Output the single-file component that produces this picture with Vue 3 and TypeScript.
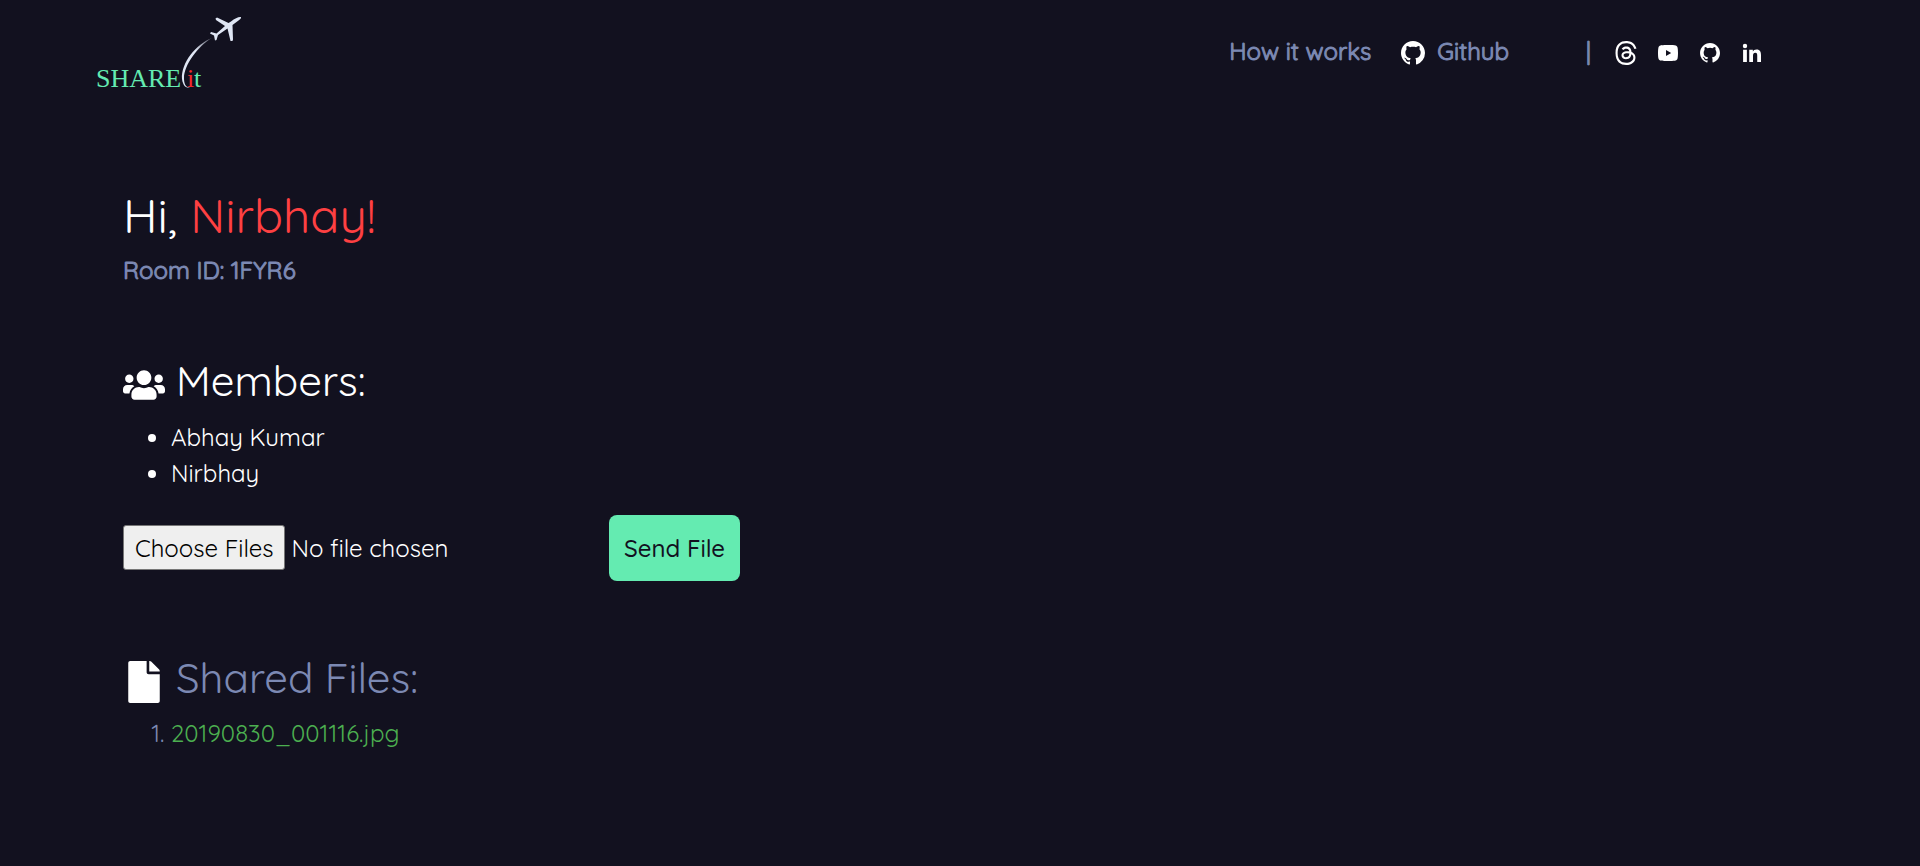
<script setup lang="ts">
const github =
  'M8 0C3.58 0 0 3.58 0 8c0 3.54 2.29 6.53 5.47 7.59.4.07.55-.17.55-.38 0-.19-.01-.82-.01-1.49-2.01.37-2.53-.49-2.69-.94-.09-.23-.48-.94-.82-1.13-.28-.15-.68-.52-.01-.53.63-.01 1.08.58 1.23.82.72 1.21 1.87.87 2.33.66.07-.52.28-.87.51-1.07-1.78-.2-3.64-.89-3.64-3.95 0-.87.31-1.59.82-2.15-.08-.2-.36-1.02.08-2.12 0 0 .67-.21 2.2.82.64-.18 1.32-.27 2-.27s1.36.09 2 .27c1.53-1.04 2.2-.82 2.2-.82.44 1.1.16 1.92.08 2.12.51.56.82 1.27.82 2.15 0 3.07-1.87 3.75-3.65 3.95.29.25.54.73.54 1.48 0 1.07-.01 1.93-.01 2.2 0 .21.15.46.55.38A8.01 8.01 0 0016 8c0-4.42-3.58-8-8-8'

const user: string = 'Nirbhay'
const roomId: string = '1FYR6'
const members: string[] = ['Abhay Kumar', 'Nirbhay']
const sharedFiles: string[] = ['20190830_001116.jpg']
</script>

<template>
  <div class="page">
    <header class="header">
      <a href="#" class="logo" aria-label="SHAREit home">
        <svg width="146" height="80" viewBox="0 0 146 80">
          <defs>
            <linearGradient id="trail" x1="0" y1="1" x2="1" y2="0">
              <stop offset="0.6" stop-color="#dfe6f4" />
              <stop offset="1" stop-color="#dfe6f4" stop-opacity="0.3" />
            </linearGradient>
          </defs>
          <text x="-1" y="74" class="logo-text">SHARE</text>
          <text x="90" y="74" class="logo-text logo-red">i</text>
          <text x="97" y="74" class="logo-text">t</text>
          <path d="M115 25C99 31 84 50 85 66C86 73 89 75 93 75C88 74 87 70 87 65C87 52 101 33 115 25Z" fill="url(#trail)" />
          <path d="M144 4C142 3.500 138 5 134 8.500L131.500 10L120 4.500L118.500 5.500L119 7L128 13L119.500 20.500L114 19L113 20.500L117 22.500L118 27.500L119.500 27L121 22L130.500 15.500L133.500 28L135.500 28L136 26.500L135.500 12L139.500 9C142.500 7 144.500 5.500 144 4Z" fill="#dfe6f4" />
        </svg>
      </a>
      <nav class="nav">
        <a href="#how" class="nav-link"><span class="label">How it works</span></a>
        <a href="#github" class="nav-link github-link">
          <svg width="24" height="24" viewBox="0 0 16 16" fill="#fff"><path :d="github" /></svg>
          <span class="label">Github</span>
        </a>
        <span class="divider label">|</span>
        <div class="socials">
          <a href="#threads" aria-label="Threads">
            <svg width="24" height="24" viewBox="0 0 16 16" fill="#fff"><path d="M6.321 6.016c-.27-.18-1.166-.802-1.166-.802.756-1.081 1.753-1.502 3.132-1.502.975 0 1.803.327 2.394.948s.928 1.509 1.005 2.644q.492.207.905.484c1.109.745 1.719 1.86 1.719 3.137 0 2.716-2.226 5.075-6.256 5.075C4.594 16 1 13.987 1 7.994 1 2.034 4.482 0 8.044 0 9.69 0 13.55.243 15 5.036l-1.36.353C12.516 1.974 10.163 1.43 8.006 1.43c-3.565 0-5.582 2.171-5.582 6.79 0 4.143 2.254 6.343 5.63 6.343 2.777 0 4.847-1.443 4.847-3.556 0-1.438-1.208-2.127-1.27-2.127-.236 1.234-.868 3.31-3.644 3.31-1.618 0-3.013-1.118-3.013-2.582 0-2.09 1.984-2.847 3.55-2.847.586 0 1.294.04 1.663.114 0-.637-.54-1.728-1.9-1.728-1.25 0-1.566.405-1.967.868ZM8.716 8.19c-2.04 0-2.304.87-2.304 1.416 0 .878 1.043 1.168 1.6 1.168 1.02 0 2.067-.282 2.232-2.423a6.2 6.2 0 0 0-1.528-.161" /></svg>
          </a>
          <a href="#youtube" aria-label="YouTube">
            <svg width="24" height="24" viewBox="0 0 24 24" fill="#fff"><path fill-rule="evenodd" d="M12.244 4c.534.003 1.870.016 3.290.073l.504.022c1.430.067 2.858.183 3.566.380.945.266 1.688 1.040 1.939 2.022C21.942 8.056 21.992 11.099 21.998 11.836v.327c-.006.736-.056 3.779-.456 5.338-.254.985-.997 1.760-1.938 2.022-.709.197-2.137.313-3.566.380l-.504.022c-1.420.057-2.756.070-3.290.073h-.490c-1.130-.006-5.856-.057-7.360-.475-.945-.266-1.687-1.040-1.938-2.022C2.056 15.942 2.006 12.899 2 12.163v-.327c.006-.737.056-3.780.456-5.339.254-.985.997-1.760 1.938-2.022C5.898 4.057 10.624 4.006 11.754 4zM10 9v6l5.200-3z" /></svg>
          </a>
          <a href="#github-profile" aria-label="Github profile">
            <svg width="24" height="24" viewBox="0 0 24 24" fill="#fff"><path d="M12.026 2c-5.509 0-9.974 4.465-9.974 9.974 0 4.406 2.857 8.145 6.821 9.465.499.09.679-.217.679-.481 0-.237-.008-.865-.011-1.696-2.775.602-3.361-1.338-3.361-1.338-.452-1.152-1.107-1.459-1.107-1.459-.905-.619.069-.605.069-.605 1.002.07 1.527 1.028 1.527 1.028.89 1.524 2.336 1.084 2.902.829.091-.645.351-1.085.635-1.334-2.214-.251-4.542-1.107-4.542-4.93 0-1.087.389-1.979 1.024-2.675-.101-.253-.446-1.268.099-2.64 0 0 .837-.269 2.742 1.021a9.582 9.582 0 0 1 2.496-.336 9.554 9.554 0 0 1 2.496.336c1.906-1.291 2.742-1.021 2.742-1.021.545 1.372.203 2.387.099 2.64.64.696 1.024 1.587 1.024 2.675 0 3.833-2.33 4.675-4.552 4.922.355.308.675.916.675 1.846 0 1.334-.012 2.41-.012 2.737 0 .267.178.577.687.479C19.146 20.115 22 16.379 22 11.974 22 6.465 17.535 2 12.026 2z" /></svg>
          </a>
          <a href="#linkedin" aria-label="LinkedIn">
            <svg width="24" height="24" viewBox="0 0 24 24" fill="#fff"><circle cx="4.983" cy="5.009" r="2.188" /><path d="M9.237 8.855v12.139h3.769v-6.003c0-1.584.298-3.118 2.262-3.118 1.937 0 1.961 1.811 1.961 3.218v5.904H21v-6.657c0-3.27-.704-5.783-4.526-5.783-1.835 0-3.065 1.007-3.568 1.96h-.051v-1.66H9.237zm-6.142 0H6.87v12.139H3.095z" /></svg>
          </a>
        </div>
      </nav>
    </header>

    <main class="main">
      <h1 class="greeting">Hi, <span class="name">{{ user }}!</span></h1>
      <p class="room">Room ID: {{ roomId }}</p>

      <h2 class="heading members-heading">
        <svg width="42" height="42" viewBox="0 0 640 512" fill="#fff"><path d="M96 224c35.3 0 64-28.7 64-64s-28.7-64-64-64-64 28.7-64 64 28.7 64 64 64zm448 0c35.3 0 64-28.7 64-64s-28.7-64-64-64-64 28.7-64 64 28.7 64 64 64zm32 32h-64c-17.6 0-33.5 7.1-45.1 18.6 40.3 22.1 68.9 62 75.1 109.4h66c17.7 0 32-14.3 32-32v-32c0-35.3-28.7-64-64-64zm-256 0c61.9 0 112-50.1 112-112S381.9 32 320 32 208 82.1 208 144s50.1 112 112 112zm76.8 32h-8.3c-20.8 10-43.9 16-68.5 16s-47.6-6-68.5-16h-8.3C179.6 288 128 339.6 128 403.2V432c0 26.5 21.5 48 48 48h288c26.5 0 48-21.5 48-48v-28.8c0-63.6-51.6-115.2-115.2-115.2zm-223.7-13.4C161.5 263.1 145.6 256 128 256H64c-35.3 0-64 28.7-64 64v32c0 17.7 14.3 32 32 32h65.9c6.3-47.4 34.9-87.3 75.2-109.4z" /></svg>
        Members:
      </h2>
      <ul class="list">
        <li v-for="member in members" :key="member">{{ member }}</li>
      </ul>

      <form class="upload" @submit.prevent>
        <input type="file" multiple class="file-input" aria-label="Files to send" />
        <button type="submit" class="send">Send File</button>
      </form>

      <h2 class="heading files-heading">
        <svg width="42" height="42" viewBox="0 0 384 512" fill="#fff"><path d="M224 136V0H24C10.700 0 0 10.700 0 24v464c0 13.300 10.700 24 24 24h336c13.300 0 24-10.700 24-24V160H248c-13.200 0-24-10.800-24-24zm160-14.100v6.100H256V0h6.100c6.400 0 12.500 2.500 17 7l97.900 98c4.500 4.500 7 10.600 7 16.900z" /></svg>
        Shared Files:
      </h2>
      <ol class="list files">
        <li v-for="file in sharedFiles" :key="file"><a href="#file">{{ file }}</a></li>
      </ol>
    </main>
  </div>
</template>

<style>
body {
  margin: 0;
  background: #12111f;
}
</style>

<style scoped>
.page {
  box-sizing: border-box;
  min-height: 100vh;
  font-family: Quicksand, Lato, sans-serif;
  font-size: 24px;
  font-weight: 400;
  line-height: 36px;
  color: #fff;
}
.header {
  display: flex;
  align-items: center;
  justify-content: space-between;
  height: 106px;
  padding: 0 156px 0 97px;
}
.logo {
  display: block;
  height: 80px;
}
.logo-text {
  font-family: "Liberation Serif", serif;
  font-size: 26px;
  fill: #64ebb1;
}
.logo-red {
  fill: #f0282d;
}
svg {
  display: block;
  flex: none;
}
.nav {
  display: flex;
  align-items: center;
}
.nav-link {
  color: #7c89b3;
  text-decoration: none;
}
.label {
  display: block;
  padding-bottom: 4px;
  -webkit-text-stroke: 1px currentColor;
}
.github-link {
  display: flex;
  align-items: center;
  gap: 12px;
  margin-left: 30px;
}
.divider {
  margin-left: 77px;
  color: #7c89b3;
}
.socials {
  display: flex;
  align-items: center;
  gap: 18px;
  margin-left: 23px;
}
.main {
  padding: 80px 123px 0;
}
h1,
h2,
p {
  margin: 0;
}
.greeting {
  font-size: 48px;
  font-weight: 400;
  line-height: 58px;
}
.name {
  color: #fe4042;
}
.room {
  margin-top: 8px;
  color: #7c89b3;
  -webkit-text-stroke: 1px currentColor;
}
.heading {
  display: flex;
  align-items: center;
  gap: 11px;
  font-size: 42px;
  font-weight: 400;
  line-height: 50px;
}
.heading svg {
  margin-top: 8px;
}
.members-heading {
  margin-top: 68px;
}
.list {
  margin: 13px 0 0;
  padding-left: 48px;
}
.upload {
  display: flex;
  align-items: center;
  gap: 24px;
  margin-top: 24px;
}
.file-input {
  width: 462px;
  height: 46px;
  font: inherit;
  color: #fff;
}
.file-input::file-selector-button {
  box-sizing: border-box;
  height: 45px;
  margin: 0 6px 0 0;
  padding: 0 11px;
  border: 1px solid #767676;
  border-radius: 3px;
  background: #efefef;
  color: #000;
  font: inherit;
}
.send {
  height: 66px;
  padding: 0 15px;
  border: 0;
  border-radius: 8px;
  background: #64ebb1;
  color: #12111f;
  font: inherit;
  font-weight: 500;
}
.files-heading {
  margin-top: 72px;
  color: #7c89b3;
}
.files {
  margin-top: 12px;
  color: #7c89b3;
}
.files a {
  color: #4caf50;
  text-decoration: none;
}
</style>
